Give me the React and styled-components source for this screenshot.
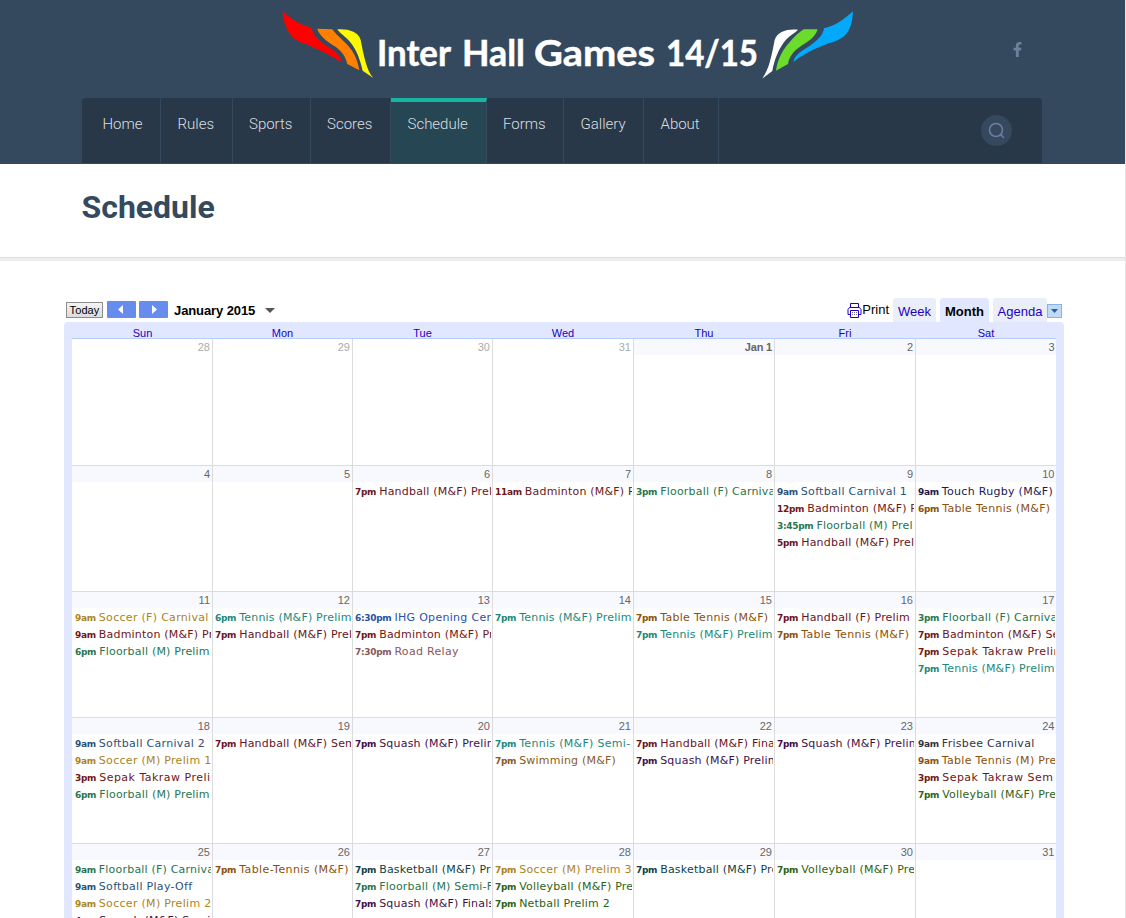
import React from "react";
import styled, { createGlobalStyle } from "styled-components";
import { FaFacebookF } from "react-icons/fa";

const GlobalStyle = createGlobalStyle`
  * { box-sizing: border-box; }
  html, body { margin: 0; background: #fff; }
  body { height: 918px; overflow: hidden; }
`;

const Page = styled.div`
  width: 1126px;
  height: 918px;
  overflow: hidden;
  border-right: 1px solid #e4e4e4;
  font-family: "Liberation Sans", Arial, sans-serif;
`;

const Header = styled.header`
  height: 164px;
  background: #34495e;
  display: flex;
  flex-direction: column;
`;

const Brand = styled.div`
  height: 98px;
  display: flex;
  padding-left: 270px;
`;

const Social = styled.a`
  margin: 42px 0 0 140px;
  height: 15px;
  color: #6c7f9c;
  line-height: 0;
`;

const Nav = styled.nav`
  width: 960px;
  height: 65px;
  margin-left: 82px;
  background: #293848;
  border-radius: 4px 4px 0 0;
  display: flex;
`;

const NavItem = styled.a`
  width: ${(p) => p.$w}px;
  padding: ${(p) => (p.$active ? 13 : 17)}px 0 0 ${(p) => p.$pad}px;
  border-right: 1px solid #34495e;
  border-top: ${(p) => (p.$active ? "4px solid #18b5a4" : "0")};
  background: ${(p) => (p.$active ? "#264653" : "transparent")};
  border-top-left-radius: ${(p) => (p.$first ? 4 : 0)}px;
  color: #dcdfe2;
  font: 300 15px/18px Roboto, sans-serif;
  white-space: nowrap;
`;

const SearchButton = styled.button`
  margin: 17px 30px 0 auto;
  width: 31px;
  height: 31px;
  padding: 0;
  border: 0;
  border-radius: 50%;
  background: #34495e;
  display: flex;
  align-items: center;
  justify-content: center;
`;

const TitleBar = styled.div`
  height: 97px;
  padding: 24px 0 0 81.5px;
  border-bottom: 3px solid #eee;
  box-shadow: inset 0 -1px 0 #dedede;
`;

const Title = styled.h1`
  margin: 0;
  color: #34495e;
  font: 700 32px/38px Roboto, sans-serif;
`;

const Calendar = styled.section`
  width: 1000px;
  margin: 37px 0 0 64px;
`;

const Toolbar = styled.div`
  height: 24px;
  display: flex;
  align-items: flex-start;
  padding-left: 2px;
`;

const TodayButton = styled.button`
  width: 37px;
  height: 16px;
  margin: 4px 4px 0 0;
  padding: 0;
  border: 1px solid #8d8d8d;
  background: linear-gradient(#f4f4f4, #dcdcdc);
  font: 11px/14px "Liberation Sans", Arial, sans-serif;
  letter-spacing: 0.1px;
  color: #000;
`;

const StepButton = styled.button`
  width: 29px;
  height: 17px;
  margin: 3px 3px 0 0;
  padding: ${(p) => (p.$next ? "0 0 0 2px" : "0 2px 0 0")};
  border: 0;
  border-radius: 1px;
  background: #668cee;
  display: flex;
  align-items: center;
  justify-content: center;
`;

const MonthLabel = styled.div`
  margin: 4px 0 0 3px;
  width: 91px;
  font-weight: bold;
  font-size: 13px;
  letter-spacing: -0.1px;
  line-height: 17px;
`;

const DownArrow = styled.span`
  margin-top: 10px;
  border: 5px solid transparent;
  border-top-color: #555;
  border-bottom: 0;
`;

const Print = styled.a`
  margin: 4px 4px 0 auto;
  display: flex;
  font-size: 13px;
  line-height: 15px;
  svg { margin-top: 1px; }
`;

const Tab = styled.a`
  width: ${(p) => p.$w}px;
  height: 24px;
  margin-right: ${(p) => (p.$last ? 0 : 4)}px;
  border-radius: 3px 3px 0 0;
  background: ${(p) => (p.$active ? "#e1e7ff" : "#e9eef8")};
  color: ${(p) => (p.$active ? "#000" : "#2200c1")};
  font-weight: ${(p) => (p.$active ? "bold" : "normal")};
  font-size: 13px;
  line-height: 27px;
  text-align: center;
`;

const TabMenu = styled.span`
  width: 15px;
  height: 14px;
  margin: 6px 2px 0 0;
  border: 1px solid #86b4e6;
  background: #c2d9f4;
  display: flex;
  align-items: center;
  justify-content: center;
`;

const Frame = styled.div`
  background: #e1e7ff;
  border-radius: 4px 4px 0 0;
  padding: 0 8px;
  height: 620px;
`;

const columns = "140px 140px 140px 141px 141px 141px 141px";

const DayNames = styled.div`
  display: grid;
  grid-template-columns: ${columns};
  height: 17px;
  border-bottom: 1px solid #b5cdfb;
  color: #2200c1;
  font-size: 11px;
  line-height: 22px;
  text-align: center;
  span { padding-left: 1px; }
`;

const Week = styled.div`
  display: grid;
  grid-template-columns: ${columns};
  height: ${(p) => (p.$first ? 127 : 126)}px;
  background: #fff;
  border-bottom: 1px solid #dcdcdc;
`;

const Day = styled.div`
  overflow: hidden;
  padding-right: 1px;
  border-left: ${(p) => (p.$first ? "0" : "1px solid #dcdcdc")};
`;

const DayNumber = styled.div`
  height: 16px;
  margin: 0 -1px 1px 0;
  padding-right: ${(p) => (p.$last ? 1.5 : 2)}px;
  background: ${(p) => (p.$muted ? "#fff" : "#f8f9ff")};
  color: ${(p) => (p.$muted ? "#aaa" : "#666")};
  font-size: 11px;
  font-weight: ${(p) => (p.$bold ? "bold" : "normal")};
  letter-spacing: ${(p) => (p.$bold ? -0.2 : 0)}px;
  line-height: 17px;
  text-align: right;
`;

const Event = styled.div`
  height: 17px;
  margin-left: ${(p) => (p.$first ? 3 : 2)}px;
  overflow: hidden;
  white-space: nowrap;
  color: ${(p) => p.$color};
  font: 11px/17px "DejaVu Sans", Verdana, sans-serif;
  letter-spacing: ${(p) => p.$spacing}px;
`;

const Time = styled.b`
  font-size: 9px;
  letter-spacing: -0.3px;
  margin-right: 3px;
`;

const C = {
  Handball: "#691426",
  Badminton: "#711616",
  Floorball: "#28754e",
  Softball: "#29527a",
  Tennis: "#1b887a",
  "Table Tennis": "#8c500b",
  "Table-Tennis": "#8c500b",
  IHG: "#2952a3",
  Road: "#865a5a",
  Touch: "#23164e",
  Sepak: "#711616",
  Soccer: "#ab8420",
  Squash: "#42104a",
  Swimming: "#8c5a20",
  Frisbee: "#333344",
  Volleyball: "#2f6213",
  Basketball: "#113f47",
  Netball: "#2f6213",
};
const colorOf = (t) => C[Object.keys(C).find((k) => t.startsWith(k))];
const spacingOf = (t) => {
  if (t.startsWith("Sepak")) return 0.48;
  if (t.startsWith("Table-")) return 0.42;
  if (/^(Soccer|Table|Touch|Tennis .*Semi|IHG|Road|Softball|Frisbee)/.test(t)) return 0.3;
  return 0.2;
};

const HB = "Handball (M&F) Prel";
const BM = "Badminton (M&F) Prelim";
const TN = "Tennis (M&F) Prelim";
const weeks = [
  [["28"], ["29"], ["30"], ["31"], ["Jan 1"], ["2"], ["3"]],
  [
    ["4"],
    ["5"],
    ["6", "7pm|" + HB],
    ["7", "11am|" + BM],
    ["8", "3pm|Floorball (F) Carnival"],
    ["9", "9am|Softball Carnival 1", "12pm|" + BM, "3:45pm|Floorball (M) Prel", "5pm|" + HB],
    ["10", "9am|Touch Rugby (M&F)", "6pm|Table Tennis (M&F)"],
  ],
  [
    ["11", "9am|Soccer (F) Carnival", "9am|" + BM, "6pm|Floorball (M) Prelim"],
    ["12", "6pm|" + TN, "7pm|" + HB],
    ["13", "6:30pm|IHG Opening Cer", "7pm|" + BM, "7:30pm|Road Relay"],
    ["14", "7pm|" + TN],
    ["15", "7pm|Table Tennis (M&F)", "7pm|" + TN],
    ["16", "7pm|Handball (F) Prelim", "7pm|Table Tennis (M&F)"],
    ["17", "3pm|Floorball (F) Carnival", "7pm|Badminton (M&F) Semi", "7pm|Sepak Takraw Prelim", "7pm|" + TN],
  ],
  [
    ["18", "9am|Softball Carnival 2", "9am|Soccer (M) Prelim 1", "3pm|Sepak Takraw Preli", "6pm|Floorball (M) Prelim"],
    ["19", "7pm|Handball (M&F) Semi"],
    ["20", "7pm|Squash (M&F) Prelim"],
    ["21", "7pm|Tennis (M&F) Semi-", "7pm|Swimming (M&F)"],
    ["22", "7pm|Handball (M&F) Fina", "7pm|Squash (M&F) Prelim"],
    ["23", "7pm|Squash (M&F) Prelim"],
    ["24", "9am|Frisbee Carnival", "9am|Table Tennis (M) Prelim", "3pm|Sepak Takraw Sem", "7pm|Volleyball (M&F) Pre"],
  ],
  [
    ["25", "9am|Floorball (F) Carnival", "9am|Softball Play-Off", "9am|Soccer (M) Prelim 2", "4pm|Squash (M&F) Semi"],
    ["26", "7pm|Table-Tennis (M&F)"],
    ["27", "7pm|Basketball (M&F) Prelim", "7pm|Floorball (M) Semi-Final", "7pm|Squash (M&F) Finals"],
    ["28", "7pm|Soccer (M) Prelim 3", "7pm|Volleyball (M&F) Pre", "7pm|Netball Prelim 2"],
    ["29", "7pm|Basketball (M&F) Prelim"],
    ["30", "7pm|Volleyball (M&F) Pre"],
    ["31"],
  ],
];

const nav = [
  ["Home", 79, 20.5],
  ["Rules", 72, 16.5],
  ["Sports", 78, 16],
  ["Scores", 80, 16],
  ["Schedule", 96, 16.5],
  ["Forms", 77, 16],
  ["Gallery", 80, 16.5],
  ["About", 75, 16.5],
];

function Logo() {
  return (
    <svg width="600" height="98" viewBox="0 0 600 98">
      <g transform="scale(0.33333)">
        <path fill="#fe0000" d="M37 32C62 58 90 73 125 83C128 105 148 122 170 138C195 153 212 165 215 187C180 165 150 152 110 133C65 120 45 95 37 32Z" />
        <path fill="#ff8000" d="M142 86L187 88C195 100 205 108 220 123C250 150 262 175 268 211L232 192C225 160 205 145 180 130C160 115 145 100 142 86Z" />
        <path fill="#fffa00" d="M202 88C235 86 265 95 272 120C280 160 290 215 310 234L278 212C268 170 255 140 235 120C222 107 208 98 202 88Z" />
        <g transform="translate(870 0)">
          <path fill="#fff" d="M714 89C680 86 652 95 644 120C636 160 628 210 606 236L637 213C643 180 655 145 680 117C692 105 706 98 714 89Z" />
          <path fill="#6bdb2c" d="M731 88L773 88C768 105 755 118 738 128C705 148 688 165 684 192L648 212C652 185 662 155 690 125C708 105 720 95 731 88Z" />
          <path fill="#04a9fb" d="M879 34C850 60 830 75 792 85C790 105 770 125 745 140C715 158 702 170 701 186C730 160 780 140 800 132C850 118 875 105 879 34Z" />
        </g>
      </g>
      <g fill="#fff" stroke="#fff" strokeWidth="0.5" fontFamily="Lato, sans-serif" fontWeight="700" fontSize="36">
        <text x="107" y="66" textLength="74" lengthAdjust="spacingAndGlyphs">Inter</text>
        <text x="192" y="66" textLength="63" lengthAdjust="spacingAndGlyphs">Hall</text>
        <text x="264" y="66" textLength="121" lengthAdjust="spacingAndGlyphs">Games</text>
        <text x="396" y="66" textLength="92" lengthAdjust="spacingAndGlyphs">14/15</text>
      </g>
    </svg>
  );
}

function Printer() {
  return (
    <svg width="15" height="15" viewBox="0 0 15 15" fill="#fff" stroke="#2200c1">
      <path d="M3.5 5V.5h8V5" />
      <path d="M2.5 4.500h10l1.500 2v5h-13v-5z" />
      <path d="M3.500 7.500h8v7h-8z" />
      <path d="M5 9.500h5M5 11.500h5" strokeDasharray="1 1" stroke="#667" />
    </svg>
  );
}

export default function App() {
  return (
    <Page>
      <GlobalStyle />
      <Header>
        <Brand>
          <Logo />
          <Social><FaFacebookF size={15} /></Social>
        </Brand>
        <Nav>
          {nav.map(([label, w, pad], i) => (
            <NavItem key={label} $w={w} $pad={pad} $first={i === 0} $active={label === "Schedule"}>
              {label}
            </NavItem>
          ))}
          <SearchButton aria-label="Search">
            <svg width="17" height="17" viewBox="0 0 17 17" fill="none" stroke="#73799f" strokeWidth="1.6">
              <circle cx="8" cy="8" r="6.500" />
              <path d="M12.500 12.500L16 16" />
            </svg>
          </SearchButton>
        </Nav>
      </Header>
      <TitleBar>
        <Title>Schedule</Title>
      </TitleBar>
      <Calendar>
        <Toolbar>
          <TodayButton>Today</TodayButton>
          <StepButton aria-label="Previous">
            <svg width="5" height="9"><path fill="#fff" d="M5 0v9L0 4.500z" /></svg>
          </StepButton>
          <StepButton $next aria-label="Next">
            <svg width="5" height="9"><path fill="#fff" d="M0 0v9l5-4.500z" /></svg>
          </StepButton>
          <MonthLabel>January 2015</MonthLabel>
          <DownArrow />
          <Print><Printer />Print</Print>
          <Tab $w={43}>Week</Tab>
          <Tab $w={49} $active>Month</Tab>
          <Tab $w={54} $last>Agenda</Tab>
          <TabMenu>
            <svg width="7" height="4"><path fill="#1c61a9" d="M0 0h7L3.500 4z" /></svg>
          </TabMenu>
        </Toolbar>
        <Frame>
          <DayNames>
            {["Sun", "Mon", "Tue", "Wed", "Thu", "Fri", "Sat"].map((d) => <span key={d}>{d}</span>)}
          </DayNames>
          {weeks.map((week, w) => (
            <Week key={w} $first={w === 0}>
              {week.map(([n, ...events], d) => (
                <Day key={d} $first={d === 0}>
                  <DayNumber $last={d === 6} $muted={w === 0 && d < 4} $bold={n === "Jan 1"}>{n}</DayNumber>
                  {events.map((e, i) => {
                    const [time, title] = e.split("|");
                    return (
                      <Event key={i} $first={d === 0} $color={colorOf(title)} $spacing={spacingOf(title)}>
                        <Time>{time}</Time>{title}
                      </Event>
                    );
                  })}
                </Day>
              ))}
            </Week>
          ))}
        </Frame>
      </Calendar>
    </Page>
  );
}
